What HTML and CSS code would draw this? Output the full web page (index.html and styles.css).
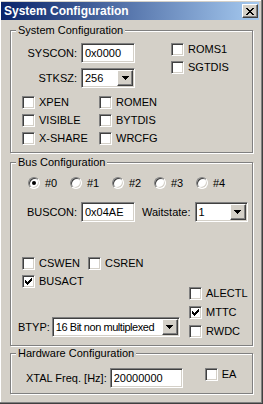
FILE: index.html
```html
<!DOCTYPE html>
<html lang="en">
  <head>
    <meta charset="UTF-8" />
    <title>System Configuration</title>
    <link rel="stylesheet" href="styles.css">
  </head>
  <body>
    <div class="window">
      <div class="titlebar">
        <span class="title">System Configuration</span>
        <span class="close-btn">
          <svg width="8" height="7" viewBox="0 0 8 7" shape-rendering="crispEdges"><path d="M0 0h2v1H0z M6 0h2v1H6z M1 1h2v1H1z M5 1h2v1H5z M2 2h4v1H2z M3 3h2v1H3z M2 4h4v1H2z M1 5h2v1H1z M5 5h2v1H5z M0 6h2v1H0z M6 6h2v1H6z"/></svg>
        </span>
      </div>

      <div class="client">
        <fieldset class="group group-system">
          <legend>System Configuration</legend>
          <div class="sys-top">
            <div class="fields">
              <label class="field-label">SYSCON:</label>
              <input class="edit w-short" type="text" value="0x0000" />
              <label class="field-label">STKSZ:</label>
              <div class="combo w-short">
                <span class="combo-text">256</span>
                <span class="combo-btn"><svg width="7" height="4" viewBox="0 0 7 4" shape-rendering="crispEdges"><path d="M0 0h7v1H0z M1 1h5v1H1z M2 2h3v1H2z M3 3h1v1H3z"/></svg></span>
              </div>
            </div>
            <div class="side-checks">
              <label class="check"><span class="box"></span>ROMS1</label>
              <label class="check"><span class="box"></span>SGTDIS</label>
            </div>
          </div>
          <div class="check-grid">
            <label class="check"><span class="box"></span>XPEN</label>
            <label class="check"><span class="box"></span>ROMEN</label>
            <label class="check"><span class="box"></span>VISIBLE</label>
            <label class="check"><span class="box"></span>BYTDIS</label>
            <label class="check"><span class="box"></span>X-SHARE</label>
            <label class="check"><span class="box"></span>WRCFG</label>
          </div>
        </fieldset>

        <fieldset class="group group-bus">
          <legend>Bus Configuration</legend>
          <div class="radios">
            <label class="radio"><span class="dot checked"></span>#0</label>
            <label class="radio"><span class="dot"></span>#1</label>
            <label class="radio"><span class="dot"></span>#2</label>
            <label class="radio"><span class="dot"></span>#3</label>
            <label class="radio"><span class="dot"></span>#4</label>
          </div>
          <div class="bus-row">
            <label class="field-label">BUSCON:</label>
            <input class="edit w-short" type="text" value="0x04AE" />
            <label class="wait-label">Waitstate:</label>
            <div class="combo w-wait">
              <span class="combo-text">1</span>
              <span class="combo-btn"><svg width="7" height="4" viewBox="0 0 7 4" shape-rendering="crispEdges"><path d="M0 0h7v1H0z M1 1h5v1H1z M2 2h3v1H2z M3 3h1v1H3z"/></svg></span>
            </div>
          </div>
          <div class="bus-bottom">
            <div class="left-col">
              <div class="cs-row">
                <label class="check w-cs"><span class="box"></span>CSWEN</label>
                <label class="check"><span class="box"></span>CSREN</label>
              </div>
              <label class="check busact"><span class="box"><svg width="7" height="7" viewBox="0 0 7 7" shape-rendering="crispEdges"><path d="M6 0h1v1H6z M5 1h2v1H5z M0 2h1v1H0z M4 2h3v1H4z M0 3h2v1H0z M3 3h3v1H3z M0 4h5v1H0z M1 5h3v1H1z M2 6h1v1H2z"/></svg></span>BUSACT</label>
              <div class="btyp-row">
                <label class="btyp-label">BTYP:</label>
                <div class="combo w-btyp">
                  <span class="combo-text tight">16 Bit non multiplexed</span>
                  <span class="combo-btn"><svg width="7" height="4" viewBox="0 0 7 4" shape-rendering="crispEdges"><path d="M0 0h7v1H0z M1 1h5v1H1z M2 2h3v1H2z M3 3h1v1H3z"/></svg></span>
                </div>
              </div>
            </div>
            <div class="right-col">
              <label class="check"><span class="box"></span>ALECTL</label>
              <label class="check"><span class="box"><svg width="7" height="7" viewBox="0 0 7 7" shape-rendering="crispEdges"><path d="M6 0h1v1H6z M5 1h2v1H5z M0 2h1v1H0z M4 2h3v1H4z M0 3h2v1H0z M3 3h3v1H3z M0 4h5v1H0z M1 5h3v1H1z M2 6h1v1H2z"/></svg></span>MTTC</label>
              <label class="check"><span class="box"></span>RWDC</label>
            </div>
          </div>
        </fieldset>

        <fieldset class="group group-hw">
          <legend>Hardware Configuration</legend>
          <div class="hw-row">
            <label class="xtal-label">XTAL Freq. [Hz]:</label>
            <input class="edit w-xtal" type="text" value="20000000" />
            <label class="check ea"><span class="box"></span>EA</label>
          </div>
        </fieldset>
      </div>
    </div>
  </body>
</html>
```

FILE: styles.css
```css
html,
body {
  margin: 0;
  padding: 0;
  background-color: #d4d0c8;
}
body {
  font-family: "Liberation Sans", Arial, sans-serif;
  font-size: 11px;
  color: #000;
}
.window {
  width: 263px;
  height: 404px;
  box-sizing: border-box;
  padding: 2px 4px 4px 1px;
  background-color: #d4d0c8;
  box-shadow: inset -1px -1px 0 #404040, inset -2px -2px 0 #808080,
    inset 1px 1px 0 #fff;
  overflow: hidden;
}
.titlebar {
  height: 18px;
  display: flex;
  align-items: center;
  padding: 0 1px 0 3px;
  background: linear-gradient(to right, #0a246a, #a6caf0);
}
.title {
  flex: 1;
  color: #fff;
  font-weight: bold;
  font-size: 12px;
  line-height: 18px;
  white-space: nowrap;
}
.close-btn,
.combo-btn {
  box-sizing: border-box;
  display: flex;
  align-items: center;
  justify-content: center;
  background-color: #d4d0c8;
  border: 1px solid;
  border-color: #fff #404040 #404040 #fff;
  box-shadow: inset -1px -1px 0 #808080;
}
.close-btn {
  width: 16px;
  height: 14px;
}
.client {
  padding-top: 4px;
}

/* group boxes */
.group {
  box-sizing: border-box;
  width: 243px;
  min-width: 0;
  margin: 0 0 0 9px;
  padding: 0;
  border: 1px solid #808080;
  box-shadow: 1px 1px 0 #fff, inset 1px 1px 0 #fff;
}
.group legend {
  margin-left: 5px;
  padding: 0 2px;
  line-height: 13px;
  background-color: #d4d0c8;
}
.group-system {
  height: 129px;
}
.group-bus {
  height: 190px;
  margin-top: 3px;
}
.group-hw {
  height: 47px;
  margin-top: 1px;
}

/* controls */
.edit,
.combo {
  box-sizing: border-box;
  height: 20px;
  margin: 0;
  border: 1px solid;
  border-color: #808080 #fff #fff #808080;
  box-shadow: inset 1px 1px 0 #404040, inset -1px -1px 0 #d4d0c8;
  background-color: #fff;
  font: inherit;
  color: #000;
}
.edit {
  padding: 0 0 0 3px;
  outline: none;
}
.combo {
  display: flex;
  align-items: center;
  padding: 1px;
}
.combo-text {
  flex: 1;
  min-width: 0;
  padding-left: 2px;
  white-space: nowrap;
  overflow: hidden;
}
.combo-text.tight {
  letter-spacing: -0.45px;
}
.combo-btn {
  width: 16px;
  height: 16px;
  flex: none;
}
.w-short {
  width: 54px;
}
.w-wait {
  width: 53px;
}
.w-btyp {
  width: 128px;
}
.w-xtal {
  width: 73px;
}
.field-label {
  text-align: right;
  line-height: 20px;
  white-space: nowrap;
}
.check {
  display: flex;
  align-items: center;
  gap: 4px;
  height: 13px;
  line-height: 13px;
  white-space: nowrap;
}
.box {
  box-sizing: border-box;
  width: 13px;
  height: 13px;
  flex: none;
  display: flex;
  align-items: center;
  justify-content: center;
  border: 1px solid;
  border-color: #808080 #fff #fff #808080;
  box-shadow: inset 1px 1px 0 #404040, inset -1px -1px 0 #d4d0c8;
  background-color: #fff;
}
.radio {
  display: flex;
  align-items: center;
  gap: 5px;
  width: 42px;
  height: 12px;
  line-height: 12px;
}
.dot {
  box-sizing: border-box;
  width: 12px;
  height: 12px;
  flex: none;
  display: flex;
  align-items: center;
  justify-content: center;
  border-radius: 50%;
  border: 1px solid;
  border-color: #808080 #fff #fff #808080;
  box-shadow: inset 1px 1px 0 #404040, inset -1px -1px 0 #d4d0c8;
  background-color: #fff;
}
.dot.checked::after {
  content: "";
  width: 4px;
  height: 4px;
  border-radius: 50%;
  background-color: #000;
}

/* system group */
.sys-top {
  display: flex;
  align-items: flex-start;
  padding: 6px 0 0 11px;
}
.fields {
  display: grid;
  grid-template-columns: 55px 54px;
  column-gap: 4px;
  row-gap: 5px;
  align-items: center;
}
.side-checks {
  display: flex;
  flex-direction: column;
  gap: 5px;
  margin-left: 36px;
}
.check-grid {
  display: grid;
  grid-template-columns: 77px 77px;
  row-gap: 5px;
  margin-top: 8px;
  padding-left: 11px;
}

/* bus group */
.radios {
  display: flex;
  padding: 8px 0 0 17px;
}
.bus-row {
  display: flex;
  align-items: center;
  margin-top: 13px;
  padding-left: 11px;
}
.bus-row .field-label {
  width: 55px;
  margin-right: 4px;
}
.wait-label {
  margin: 0 4px 0 7px;
}
.bus-bottom {
  display: flex;
  align-items: flex-start;
  margin-top: 35px;
  padding-left: 11px;
}
.left-col {
  width: 167px;
}
.cs-row {
  display: flex;
}
.w-cs {
  width: 66px;
}
.busact {
  margin-top: 5px;
}
.btyp-row {
  display: flex;
  align-items: center;
  margin: 29px 0 0 -4px;
}
.btyp-label {
  margin-right: 2px;
}
.right-col {
  display: flex;
  flex-direction: column;
  gap: 6px;
  margin-top: 30px;
}

/* hardware group */
.hw-row {
  display: flex;
  align-items: flex-start;
  padding: 8px 0 0 15px;
}
.xtal-label {
  line-height: 20px;
  margin-right: 3px;
}
.ea {
  margin-left: 22px;
}
```
